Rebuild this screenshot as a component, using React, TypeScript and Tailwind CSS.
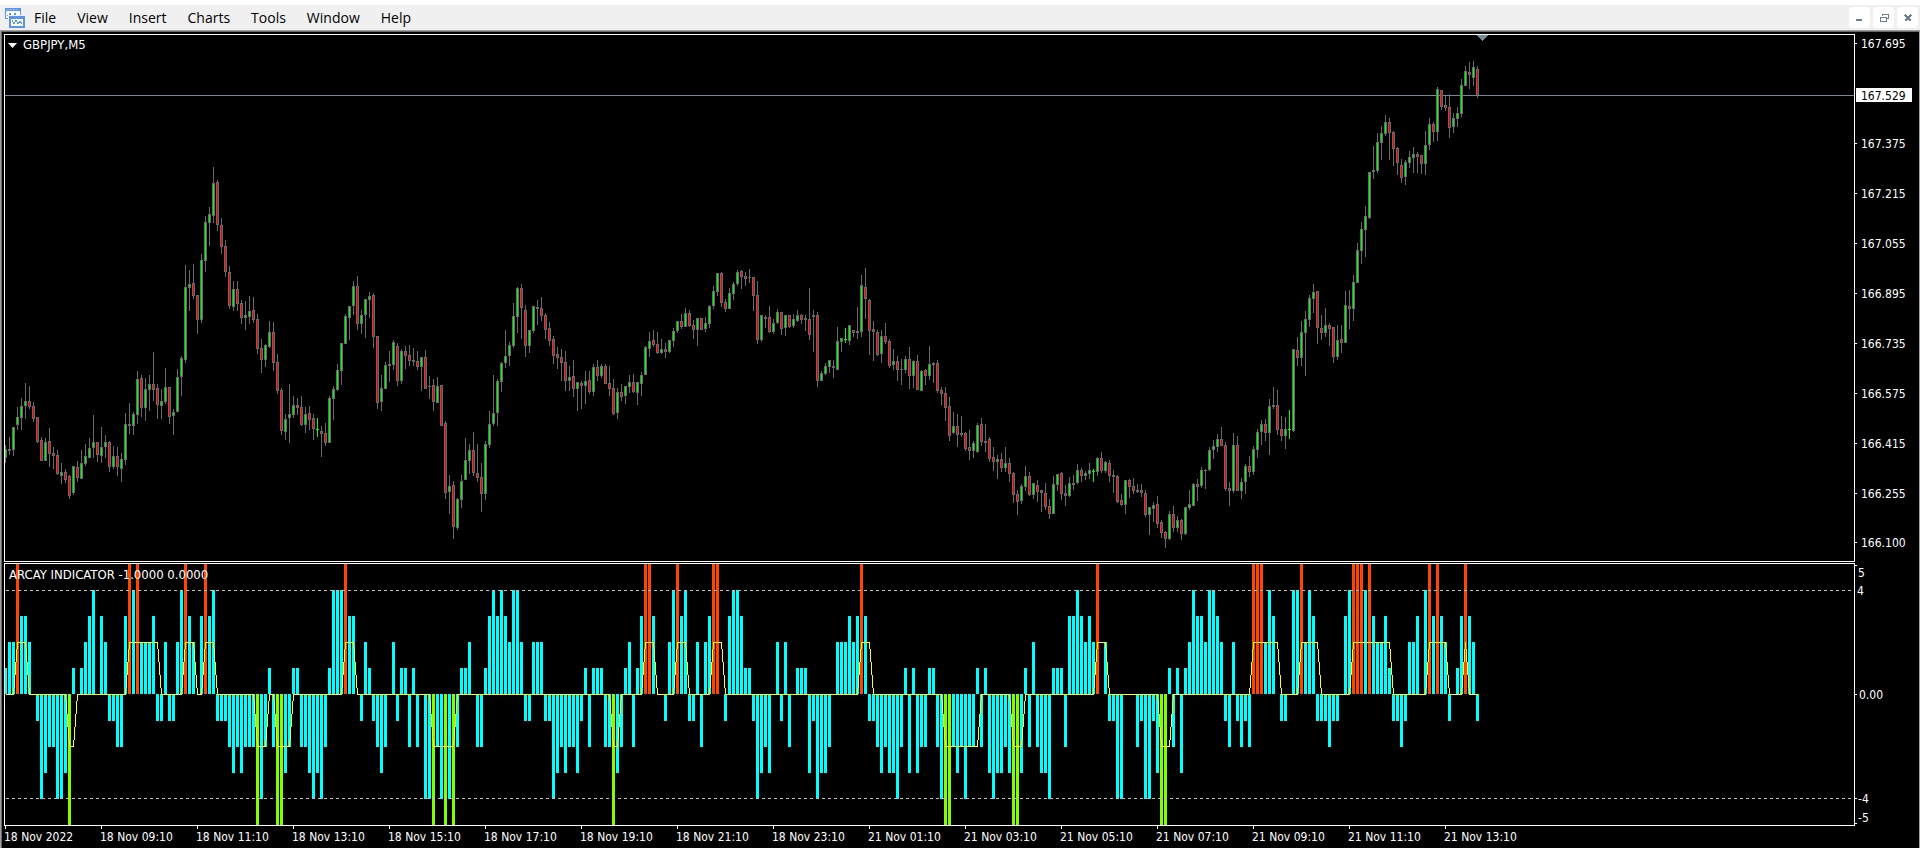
import React from "react";

type Candle = { high: number; top: number; bottom: number; low: number; kind: string };

// One entry per five-minute bar: high, body top, body bottom, low (y on the price pane) and
// u = up, d = down, f = flat bar.
const CANDLE_DATA = `
445 449 458 463 u,437 449 451 455 u,427 427 450 456 u,407 417 425 430 u,398 406 418 430 u,383 401 406 419 u,
386 401 407 409 d,402 406 419 422 d,417 417 442 443 d,437 440 461 461 d,438 442 461 461 u,428 441 454 467 d,
447 453 456 469 d,450 455 474 475 d,463 472 476 484 u,469 472 480 483 d,475 476 496 499 d,466 466 493 495 u,
461 467 478 482 d,450 463 479 479 u,444 456 464 466 u,438 448 458 458 u,415 442 448 458 u,442 442 455 462 d,
427 447 456 463 u,435 442 447 458 u,441 442 467 472 d,446 456 467 469 u,447 456 467 476 d,453 459 469 482 u,
413 424 460 465 u,403 424 426 434 u,412 414 426 435 u,371 379 415 424 u,375 378 408 417 d,378 389 408 421 u,
375 384 390 411 u,352 384 390 401 d,384 388 405 419 d,389 401 406 419 u,368 387 402 404 u,387 387 417 424 d,
409 412 416 435 u,369 377 412 412 u,356 358 377 396 u,265 287 360 363 u,270 284 288 311 u,264 283 296 299 d,
295 295 320 334 d,254 260 320 323 u,216 222 261 272 u,207 214 223 246 u,167 183 216 223 u,180 182 225 231 d,
218 225 247 254 d,240 246 272 277 d,266 272 306 309 d,281 289 307 311 u,281 289 304 311 d,300 303 318 324 d,
301 315 318 330 u,296 311 317 324 u,297 310 320 323 d,314 319 349 354 d,339 348 360 373 d,344 345 360 367 u,
321 332 347 348 u,322 332 363 371 d,354 362 391 394 d,388 390 431 435 d,414 419 432 440 u,384 414 418 443 u,
396 405 415 418 u,398 405 408 415 d,396 407 425 426 d,407 414 425 433 u,406 413 420 430 d,414 418 429 440 d,
418 429 430 437 f,426 431 434 457 d,423 433 443 446 d,396 398 443 443 u,386 389 399 420 u,364 370 390 391 u,
343 343 371 385 u,314 316 344 344 u,306 306 318 340 u,281 286 306 315 u,276 286 324 330 d,310 315 324 334 u,
299 299 315 338 u,292 296 300 318 u,293 295 337 348 d,336 336 403 409 d,375 388 402 411 u,362 365 389 389 u,
351 364 366 382 u,340 342 365 370 u,343 346 381 386 d,349 351 381 384 u,346 351 356 369 d,345 355 361 366 d,
348 360 362 366 d,351 361 367 370 d,357 357 367 391 u,350 357 389 389 d,376 386 387 399 u,379 385 402 411 d,
377 386 403 403 u,385 385 426 426 d,421 423 493 499 d,475 486 492 514 u,481 485 527 539 d,498 499 528 530 u,
475 481 500 508 u,438 460 480 480 u,444 450 461 474 u,432 450 473 476 d,444 473 478 482 d,463 477 494 512 d,
441 444 494 500 u,411 424 445 448 u,375 413 424 426 u,379 381 413 426 u,362 363 382 392 u,330 356 363 368 u,
342 345 356 366 u,303 316 346 348 u,287 288 317 333 u,284 288 308 339 d,305 310 346 357 d,330 330 346 353 u,
306 306 331 333 u,300 307 309 325 d,297 308 316 321 d,313 315 330 339 d,322 328 341 346 d,336 339 356 364 d,
347 354 358 369 d,349 357 363 381 d,351 362 381 391 d,366 377 381 391 u,360 376 389 397 d,382 382 389 411 u,
381 383 386 409 d,371 381 386 404 u,371 380 392 394 d,364 367 392 396 u,360 367 376 381 d,364 366 376 378 u,
364 366 384 384 d,366 383 389 396 d,379 388 414 415 d,388 392 413 419 u,384 392 397 401 d,386 386 396 404 u,
375 382 387 393 u,374 382 392 393 d,382 382 393 405 u,372 375 384 396 u,346 347 375 375 u,332 341 349 357 u,
330 340 345 347 d,332 344 353 354 d,339 349 353 354 u,343 349 352 358 d,340 340 352 353 u,328 331 341 347 u,
321 321 331 333 u,314 321 327 329 d,308 313 327 327 u,310 313 326 327 d,320 325 330 339 d,318 318 330 346 u,
318 318 330 330 d,317 323 329 332 u,305 306 324 328 u,286 291 306 309 u,273 273 292 296 u,272 273 303 307 d,
299 302 309 312 d,288 293 309 309 u,282 284 294 300 u,270 272 284 286 u,270 271 277 289 d,272 276 279 286 d,
269 277 278 283 d,277 277 296 311 d,281 295 340 344 d,315 315 340 342 u,315 317 319 328 d,306 317 332 333 d,
319 323 332 334 u,309 312 323 324 u,312 312 329 335 d,315 315 328 336 u,315 315 327 328 d,314 319 326 328 u,
310 315 321 322 u,314 315 320 324 d,315 318 320 331 d,288 319 335 340 d,310 315 317 352 d,312 315 381 387 d,
371 373 381 381 u,363 366 374 375 u,360 360 367 373 u,360 366 368 378 d,327 341 370 370 u,338 338 342 352 u,
328 339 340 343 f,325 325 341 345 u,330 330 333 337 d,307 331 333 339 d,275 285 332 337 u,268 287 299 319 d,
299 300 331 355 d,321 329 332 361 d,330 332 355 356 d,330 336 354 363 u,323 336 342 344 d,339 341 366 368 d,
349 361 365 370 u,356 361 370 381 d,359 369 370 385 u,356 359 370 373 u,347 359 376 389 d,360 361 376 388 u,
355 361 390 390 d,370 371 391 391 u,369 370 376 385 d,346 364 376 380 u,362 363 365 383 d,360 363 391 393 d,
387 390 394 405 d,387 393 408 421 d,397 406 436 441 d,412 426 433 434 u,414 426 435 447 d,416 433 435 437 d,
432 433 449 451 d,430 447 451 460 d,441 443 451 458 u,423 425 452 453 u,418 424 442 446 d,424 441 443 452 d,
437 439 459 462 d,447 457 462 471 d,455 459 462 479 u,453 459 468 472 d,447 463 468 472 u,458 463 474 482 d,
472 473 495 503 d,490 494 502 515 d,484 486 501 504 u,466 476 487 491 u,472 476 495 496 d,483 483 495 499 u,
480 485 492 502 d,490 490 493 512 d,483 493 507 510 d,499 506 514 519 d,476 484 514 514 u,474 474 485 491 u,
472 473 494 500 d,485 493 496 506 d,477 483 496 497 u,475 483 485 490 u,464 470 483 484 u,468 470 476 482 d,
471 473 476 480 u,463 470 474 479 u,469 471 472 482 f,457 458 472 476 u,452 458 471 473 d,461 462 471 473 u,
460 463 476 482 d,470 475 477 493 d,475 476 502 503 d,494 500 505 506 d,480 480 505 514 u,479 480 487 498 d,
478 486 491 494 d,484 490 492 493 d,484 490 493 497 d,490 493 515 517 d,507 507 515 535 u,502 505 509 522 u,
496 504 524 528 d,520 522 533 538 d,531 532 539 548 d,511 514 539 540 u,506 514 528 532 d,516 520 528 532 u,
519 520 534 540 d,507 507 534 535 u,490 504 508 510 u,483 484 506 506 u,479 484 487 501 d,467 470 486 488 u,
469 470 471 489 u,447 450 470 471 u,440 446 450 459 u,434 439 447 452 u,427 439 446 446 d,442 445 489 491 d,
482 488 491 506 d,433 445 491 493 u,436 445 491 491 d,478 482 491 499 u,464 466 482 494 u,456 466 472 477 d,
446 449 472 475 u,429 432 450 458 u,420 424 432 445 u,419 424 433 441 d,399 406 433 455 u,387 405 407 409 d,
390 405 430 435 d,416 429 436 441 d,417 429 436 449 u,410 429 430 439 f,349 349 431 432 u,337 350 358 366 d,
321 332 358 366 u,311 319 333 376 u,295 298 320 327 u,284 292 299 313 u,291 291 328 344 d,315 328 333 340 d,
308 325 333 337 u,323 325 329 346 d,327 327 357 363 d,325 340 357 360 u,325 339 343 353 d,291 305 343 343 u,
290 306 309 329 d,275 282 309 321 u,243 250 283 283 u,222 229 251 264 u,206 216 230 257 u,172 172 218 219 u,
146 170 172 179 u,133 142 171 173 u,126 133 143 160 u,115 122 134 136 u,118 122 133 160 d,131 132 149 166 d,
147 148 163 175 d,159 165 178 183 d,160 162 177 185 u,151 157 163 168 u,147 154 158 173 u,152 154 157 173 d,
155 155 164 174 d,131 145 164 175 u,118 124 145 150 u,122 124 132 142 d,87 89 132 141 u,90 90 107 110 d,
96 105 108 111 d,94 107 128 138 d,113 118 127 133 u,107 113 119 127 u,79 85 114 117 u,66 71 86 86 u,
62 72 75 89 d,61 67 78 86 u,66 69 95 98 d`;

const candles: Candle[] = CANDLE_DATA.trim()
  .split(",")
  .map((entry) => {
    const [high, top, bottom, low, kind] = entry.trim().split(" ");
    return { high: +high, top: +top, bottom: +bottom, low: +low, kind };
  });

const HISTOGRAM = [
  1, 2, 2, 5, 3, 3, 2, 0, -1, -4, -3, -2, -2, -4, -4, -3, -5, 1, 0, 1, 2, 3, 4, 0, 3, 2, -1, -1, -2, -2,
  3, 5, 4, 5, 2, 2, 2, 3, -1, -1, 2, -1, -1, 2, 4, 5, 3, 2, 0, 3, 5, 3, 4, -1, -1, -1, -2, -3, -2, -3,
  -2, -2, -2, -5, -4, -2, 1, -2, -5, -5, -3, -2, 1, 1, -2, -2, -3, -4, -3, -4, -2, 1, 4, 4, 4, 5, 3, 3, 0, -1,
  2, 1, -1, -2, -3, -2, 0, 2, -1, 1, 1, -2, 1, -2, 0, -4, -4, -5, -2, -4, -5, -4, -5, -2, 1, 1, 2, 0, -2, -2,
  1, 3, 4, 3, 4, 3, 2, 4, 4, 2, -1, -1, 2, 2, 2, -1, -1, -4, -3, -2, -3, -2, -2, -3, -1, 1, -2, 1, 1, 1,
  -2, -2, -5, -3, -2, 1, 2, -2, 1, 3, 5, 5, 3, 0, 0, -1, 2, 4, 5, 3, 4, -1, -1, 2, -2, 2, 3, 5, 5, 0,
  -1, 3, 4, 4, 3, 1, 1, -1, -4, -3, -2, -3, 0, 2, -1, 2, -2, 0, 1, 1, 1, -3, -1, -4, -3, -3, -2, 0, 2, 2,
  2, 3, 2, 3, 5, 3, -1, -1, -2, -3, -2, -3, -3, -4, -2, 1, -3, 1, -3, -2, -2, 1, 1, -2, -4, -5, -5, -2, -3, -2,
  -4, -2, -2, 1, -2, 1, -3, -4, -3, -3, -2, -3, -5, -5, -3, 1, -2, 2, -2, -3, -3, -4, 1, 1, 1, -2, 3, 3, 4, 3,
  2, 3, 2, 5, 0, 2, -1, -1, -4, -4, 0, 0, 0, -2, -1, -4, -4, -1, -3, -5, -5, 1, -2, 1, -3, 1, 2, 4, 3, 3,
  2, 4, 4, 3, 2, -1, -2, 2, -1, -2, -1, -2, 5, 5, 5, 2, 4, 3, 0, -1, -1, 0, 4, 4, 5, 2, 4, 3, -1, -1,
  -1, -2, -1, -1, 0, 3, 4, 5, 5, 5, 4, 5, 3, 2, 2, 3, 1, -1, -1, -2, -1, 2, 2, 3, 0, 4, 5, 3, 5, 3,
  2, -1, 0, 1, 3, 5, 3, 2, -1,
];

// Stretches of bars on which the signal line leaves zero: first bar, last bar, level.
const SIGNAL_RUNS: [number, number, number][] = [
  [3, 5, 2], [16, 17, -2], [31, 38, 2], [45, 47, 2], [50, 52, 2], [63, 65, -2], [68, 71, -2], [85, 87, 2],
  [107, 112, -2], [152, 153, -2], [160, 162, 2], [168, 170, 2], [177, 179, 2], [214, 216, 2], [235, 243, -2],
  [252, 254, -2], [273, 275, 2], [289, 291, -2], [312, 318, 2], [324, 328, 2], [337, 346, 2], [356, 360, 2],
  [365, 365, 2],
];

const STEP = 4;
const PRICE_TOP = 35;
const ZERO = 130;
const UNIT = 26;

const signalPoints = HISTOGRAM.map((_, i) => {
  const run = SIGNAL_RUNS.find(([from, to]) => i >= from && i <= to);
  return `${i * STEP + 0.5},${ZERO - (run ? run[2] : 0) * UNIT + 0.5}`;
}).join(" ");

const PRICE_LABELS: [string, number][] = [
  ["167.695", 43], ["167.375", 143], ["167.215", 193], ["167.055", 243], ["166.895", 293],
  ["166.735", 343], ["166.575", 393], ["166.415", 443], ["166.255", 493], ["166.100", 542],
];

const TIME_LABELS = [
  "18 Nov 2022", "18 Nov 09:10", "18 Nov 11:10", "18 Nov 13:10", "18 Nov 15:10", "18 Nov 17:10",
  "18 Nov 19:10", "18 Nov 21:10", "18 Nov 23:10", "21 Nov 01:10", "21 Nov 03:10", "21 Nov 05:10",
  "21 Nov 07:10", "21 Nov 09:10", "21 Nov 11:10", "21 Nov 13:10",
];

const MENUS = ["File", "View", "Insert", "Charts", "Tools", "Window", "Help"];

function AppIcon() {
  return (
    <svg className="h-5 w-5 shrink-0" viewBox="0 0 20 20" shapeRendering="crispEdges" aria-hidden="true">
      <rect x="0" y="0" width="16" height="11" fill="#5a94ee" />
      <path d="M2 1h10" stroke="#a8c8f8" strokeDasharray="2 1" />
      <rect x="1" y="3" width="14" height="7" fill="#fff" />
      <path d="M2 7h2v-2h1v3h2v-1h2v-2h1v2h3" fill="none" stroke="#5a94ee" />
      <rect x="3" y="7" width="17" height="13" fill="#f0f0f0" />
      <rect x="4" y="8" width="16" height="12" fill="#5a94ee" />
      <rect x="6" y="11" width="12" height="7" fill="#fff" />
      <path d="M7 12l2 4 2-4 2 4 2-3 2 3" fill="none" stroke="#5a94ee" />
    </svg>
  );
}

function WindowButton({ label, children }: { label: string; children: React.ReactNode }) {
  return (
    <button type="button" aria-label={label} className="flex h-[21px] w-[21px] items-center justify-center rounded-sm bg-white">
      <svg className="h-[11px] w-[11px]" viewBox="0 0 11 11" shapeRendering="crispEdges" aria-hidden="true">
        {children}
      </svg>
    </button>
  );
}

function MenuBar() {
  return (
    <header className="flex h-[25px] items-center bg-[#f0f0f0] pl-[5px] pr-[2px]">
      <AppIcon />
      <nav className="flex grow pl-[9px] font-['Open_Sans','Noto_Sans',sans-serif] text-[14px] leading-5 text-black">
        {MENUS.map((menu) => (
          <button key={menu} type="button" className="mr-[21px]">
            {menu}
          </button>
        ))}
      </nav>
      <div className="flex gap-[3px]">
        <WindowButton label="Minimize">
          <rect x="2" y="7" width="6" height="2" fill="#6d7f92" />
        </WindowButton>
        <WindowButton label="Restore">
          <path d="M4 4V2h6v4H8M2 5h6v4H2z" fill="none" stroke="#6d7f92" />
        </WindowButton>
        <WindowButton label="Close">
          <path d="M3 3l6 6M9 3l-6 6" fill="none" stroke="#6d7f92" strokeWidth="2" />
        </WindowButton>
      </div>
    </header>
  );
}

function PricePlot() {
  return (
    <div className="relative min-w-0 overflow-hidden border border-white">
      <svg className="block h-full w-full" shapeRendering="crispEdges" role="img" aria-label="GBPJPY five-minute candles">
        <rect x="0" y={95 - PRICE_TOP} width="100%" height="1" fill="#778899" />
        {candles.map(({ high, top, bottom, low, kind }, i) => {
          const x = i * STEP;
          const frame = kind === "f" ? "#00ff00" : "#696969";
          return (
            <g key={i}>
              <rect x={x} y={high - PRICE_TOP} width="1" height={low - high} fill={frame} />
              <rect x={x - 1} y={top - PRICE_TOP} width="3" height={bottom - top} fill={frame} />
              {bottom - top > 2 && (
                <rect
                  x={x}
                  y={top + 1 - PRICE_TOP}
                  width="1"
                  height={bottom - top - 2}
                  fill={kind === "u" ? "#00ff00" : "#ff0000"}
                />
              )}
            </g>
          );
        })}
        <path d="M1471 0h12l-5 6h-1z" fill="#778899" />
      </svg>
      <div className="absolute left-[3px] top-[2px] flex items-center gap-[6px] text-[13px] leading-4 text-white">
        <svg className="h-[5px] w-[9px]" viewBox="0 0 9 5" aria-hidden="true">
          <path d="M0 0h9L4.500 5z" fill="#fff" />
        </svg>
        GBPJPY,M5
      </div>
    </div>
  );
}

function PriceAxis() {
  return (
    <svg className="block h-full w-full" shapeRendering="crispEdges" fill="#fff">
      {PRICE_LABELS.map(([label, y]) => (
        <g key={label}>
          <rect x="0" y={y - 34} width="2" height="1" />
          <text x="6" y={y - 29}>{label}</text>
        </g>
      ))}
      <rect x="1" y="54" width="56" height="14" />
      <text x="6" y="66" fill="#000">167.529</text>
    </svg>
  );
}

function IndicatorPlot() {
  return (
    <div className="relative min-w-0 overflow-hidden border border-white">
      <svg className="block h-full w-full" shapeRendering="crispEdges" role="img" aria-label="Arcay indicator">
        {HISTOGRAM.map((value, i) => {
          if (value === 0) return null;
          const fill = value === 5 ? "#ff4500" : value === -5 ? "#7fff00" : "#00ffff";
          return (
            <rect
              key={i}
              x={i * STEP - 1}
              y={value > 0 ? ZERO - value * UNIT : ZERO}
              width="3"
              height={value > 0 ? value * UNIT : 1 - value * UNIT}
              fill={fill}
            />
          );
        })}
        <line x1="1" x2="100%" y1="26.500" y2="26.500" stroke="#c0c0c0" strokeDasharray="3 3" />
        <line x1="1" x2="100%" y1="234.500" y2="234.500" stroke="#c0c0c0" strokeDasharray="3 3" />
        <polyline points={signalPoints} fill="none" stroke="#ffff00" />
      </svg>
      <div className="absolute left-1 top-[3px] text-[13px] leading-4 text-white">ARCAY INDICATOR -1.0000 0.0000</div>
    </div>
  );
}

function IndicatorAxis() {
  return (
    <svg className="block h-full w-full" shapeRendering="crispEdges" fill="#fff">
      <rect x="0" y="2" width="2" height="1" />
      <rect x="0" y="131" width="2" height="1" />
      <rect x="0" y="235" width="2" height="1" />
      <rect x="0" y="260" width="2" height="1" />
      <text x="3" y="14">5</text>
      <text x="2" y="32">4</text>
      <text x="4" y="136">0.00</text>
      <text x="3" y="240">-4</text>
      <text x="3" y="259">-5</text>
    </svg>
  );
}

export default function App() {
  return (
    <div className="flex min-h-screen flex-col bg-white pt-[5px]">
      <MenuBar />
      <main className="flex grow flex-col border-x border-t border-[#a0a0a0] bg-black">
        <div className="grow border-l border-t border-[#696969] pl-[2px] pt-[2px] font-['DejaVu_Sans_Condensed','Noto_Sans',sans-serif] text-[12px] text-white">
          <div className="grid grid-cols-[minmax(0,1fr)_64px] grid-rows-[528px_263px] gap-y-[1px]">
            <PricePlot />
            <PriceAxis />
            <IndicatorPlot />
            <IndicatorAxis />
          </div>
          <div className="flex overflow-hidden">
            {TIME_LABELS.map((label) => (
              <div key={label} className="w-24 shrink-0 whitespace-nowrap leading-4">
                <div className="ml-px h-[3px] w-px bg-white" />
                {label}
              </div>
            ))}
          </div>
        </div>
      </main>
    </div>
  );
}
